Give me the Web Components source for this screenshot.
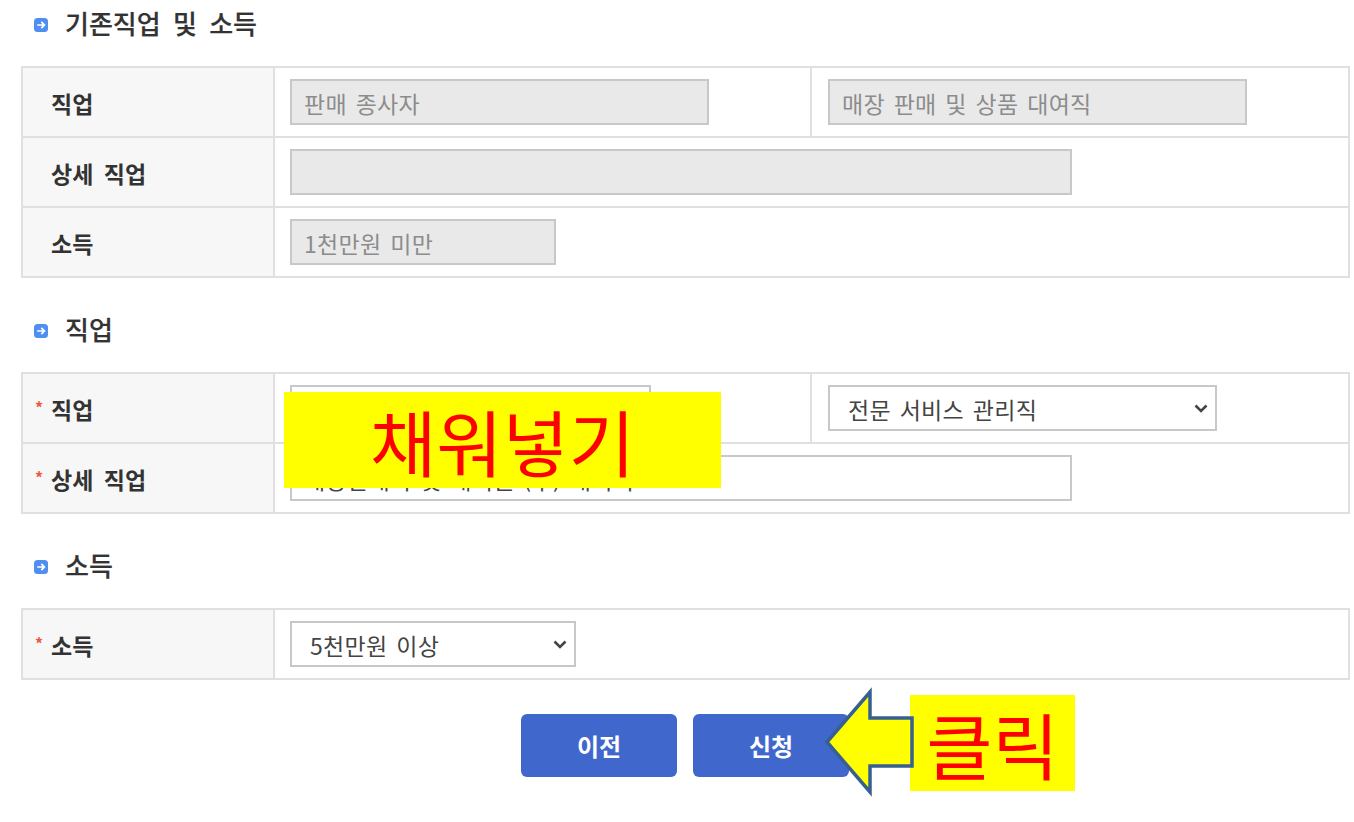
<!DOCTYPE html>
<html lang="ko">
<head>
<meta charset="utf-8">
<title>직업 및 소득</title>
<style>
  html, body { margin: 0; background: #fff; }
  body {
    width: 1354px;
    height: 822px;
    overflow: hidden;
    position: relative;
    font-family: "Noto Sans CJK KR", "Noto Sans", sans-serif;
  }
</style>
</head>
<body>
  <job-form>
    <sec-title>기존직업 및 소득</sec-title>
    <form-table>
      <form-row label="직업">
        <text-box disabled width="419">판매 종사자</text-box>
        <text-box slot="second" disabled width="419">매장 판매 및 상품 대여직</text-box>
      </form-row>
      <form-row label="상세 직업"><text-box disabled width="782"></text-box></form-row>
      <form-row label="소득"><text-box disabled width="266">1천만원 미만</text-box></form-row>
    </form-table>

    <sec-title>직업</sec-title>
    <form-table>
      <form-row label="직업" required>
        <text-box width="361"></text-box>
        <text-box slot="second" select width="389">전문 서비스 관리직</text-box>
      </form-row>
      <form-row label="상세 직업" required>
        <text-box width="782">매장판매직 및 대여원 (주) 대여직</text-box>
      </form-row>
    </form-table>

    <sec-title>소득</sec-title>
    <form-table>
      <form-row label="소득" required><text-box select width="286">5천만원 이상</text-box></form-row>
    </form-table>

    <btn-bar>
      <blue-button>이전</blue-button>
      <blue-button>신청</blue-button>
    </btn-bar>
  </job-form>

  <note-box style="left:284px;top:392px;width:437px;height:96px">채워넣기</note-box>
  <note-box style="left:910px;top:695px;width:165px;height:96px">클릭</note-box>
  <pointer-arrow></pointer-arrow>

<script>
class JobForm extends HTMLElement {
  constructor() {
    super();
    this.attachShadow({ mode: "open" });
    this.shadowRoot.innerHTML = `
      <style>
        :host { display: block; padding: 0 4px 0 21px; color: #333; }
      </style>
      <slot></slot>`;
  }
}

class SecTitle extends HTMLElement {
  constructor() {
    super();
    this.attachShadow({ mode: "open" });
    this.shadowRoot.innerHTML = `
      <style>
        :host {
          display: flex;
          align-items: center;
          gap: 17px;
          height: 44px;
          margin-bottom: 22px;
          padding-left: 13px;
          font-size: 26px;
          font-weight: 500;
          word-spacing: 5px;
          color: #333;
          -webkit-text-stroke: 0.2px #333;
        }
        svg { width: 14px; height: 14px; flex: none; margin-top: 6px; }
      </style>
      <svg viewBox="0 0 14 14">
        <rect width="14" height="14" rx="3.5" fill="#4f8ff2"/>
        <path d="M3.2 7h7M7.3 3.9 10.4 7 7.3 10.1" fill="none" stroke="#fff" stroke-width="1.7"/>
      </svg>
      <slot></slot>`;
  }
}

class FormTable extends HTMLElement {
  constructor() {
    super();
    this.attachShadow({ mode: "open" });
    this.shadowRoot.innerHTML = `
      <style>
        :host {
          display: block;
          border: solid #e0e0e0;
          border-width: 2px 2px 0;
          margin-bottom: 28px;
        }
      </style>
      <slot></slot>`;
  }
}

class FormRow extends HTMLElement {
  constructor() {
    super();
    this.attachShadow({ mode: "open" });
    const star = this.hasAttribute("required") ? `<span class="star">*</span>` : "";
    this.shadowRoot.innerHTML = `
      <style>
        :host {
          display: grid;
          grid-template-columns: 250px 2px 1fr;
          height: 68px;
          border-bottom: 2px solid #e0e0e0;
          font-size: 23px;
        }
        .label {
          position: relative;
          display: flex;
          align-items: center;
          padding: 2px 0 0 28px;
          background: #f7f7f7;
          font-weight: 700;
          word-spacing: 4px;
          color: #333;
        }
        .star {
          position: absolute;
          left: 12px;
          top: 50%;
          margin-top: -13px;
          font-size: 16px;
          line-height: 24px;
          color: #f0583f;
        }
        .line { background: #e0e0e0; }
        .cells { display: flex; min-width: 0; }
        .cell { display: flex; align-items: center; padding-left: 16px; }
        .cell.first { flex: none; padding-left: 15px; }
        .two .first { width: 520px; border-right: 2px solid #e0e0e0; }
      </style>
      <div class="label">${star}<span>${this.getAttribute("label")}</span></div>
      <div class="line"></div>
      <div class="cells">
        <div class="cell first"><slot></slot></div>
        <div class="cell"><slot name="second"></slot></div>
      </div>`;
    if (this.querySelector("[slot=second]")) {
      this.shadowRoot.querySelector(".cells").classList.add("two");
    }
  }
}

class TextBox extends HTMLElement {
  constructor() {
    super();
    this.attachShadow({ mode: "open" });
    const chevron = this.hasAttribute("select")
      ? `<svg viewBox="0 0 14 9"><path d="M1.5 1.5 7 7l5.5-5.5" fill="none" stroke="#444" stroke-width="2.6"/></svg>`
      : "";
    this.shadowRoot.innerHTML = `
      <style>
        :host {
          display: flex;
          align-items: center;
          box-sizing: border-box;
          height: 46px;
          padding: 2px 0 0 12px;
          border: 2px solid #c8c8c8;
          background: #fff;
          font-size: 23px;
          letter-spacing: 0.3px;
          word-spacing: 2px;
          color: #444;
          white-space: nowrap;
        }
        :host([disabled]) { background: #e9e9e9; color: #8c8c8c; }
        :host([select]) { padding-left: 18px; justify-content: space-between; }
        svg { width: 14px; height: 9px; margin: -2px 7px 0 0; flex: none; }
      </style>
      <span><slot></slot></span>${chevron}`;
    this.style.width = this.getAttribute("width") + "px";
  }
}

class BtnBar extends HTMLElement {
  constructor() {
    super();
    this.attachShadow({ mode: "open" });
    this.shadowRoot.innerHTML = `
      <style>
        :host { display: flex; justify-content: center; gap: 16px; margin: 34px 0 0 -1px; }
      </style>
      <slot></slot>`;
  }
}

class BlueButton extends HTMLElement {
  constructor() {
    super();
    this.attachShadow({ mode: "open" });
    this.shadowRoot.innerHTML = `
      <style>
        :host {
          display: flex;
          align-items: center;
          justify-content: center;
          width: 156px;
          height: 63px;
          border-radius: 6px;
          background: #4068cc;
          color: #fff;
          font-size: 24px;
          font-weight: 700;
        }
      </style>
      <slot></slot>`;
  }
}

// callouts pasted on top of the screenshot
class NoteBox extends HTMLElement {
  constructor() {
    super();
    this.attachShadow({ mode: "open" });
    this.shadowRoot.innerHTML = `
      <style>
        :host {
          position: absolute;
          display: flex;
          align-items: center;
          justify-content: center;
          background: #ff0;
          color: #f00;
          font-size: 72px;
          line-height: 1;
          white-space: nowrap;
        }
      </style>
      <slot></slot>`;
  }
}

class PointerArrow extends HTMLElement {
  constructor() {
    super();
    this.attachShadow({ mode: "open" });
    this.shadowRoot.innerHTML = `
      <style>
        :host { position: absolute; left: 820px; top: 684px; width: 100px; height: 116px; }
        svg { display: block; }
      </style>
      <svg width="100" height="116" viewBox="820 684 100 116">
        <path d="M827 742 870 692V718H912V766H870V792Z" fill="#ff0" stroke="#376092" stroke-width="3.5"/>
      </svg>`;
  }
}

customElements.define("job-form", JobForm);
customElements.define("sec-title", SecTitle);
customElements.define("form-table", FormTable);
customElements.define("form-row", FormRow);
customElements.define("text-box", TextBox);
customElements.define("btn-bar", BtnBar);
customElements.define("blue-button", BlueButton);
customElements.define("note-box", NoteBox);
customElements.define("pointer-arrow", PointerArrow);
</script>
</body>
</html>
